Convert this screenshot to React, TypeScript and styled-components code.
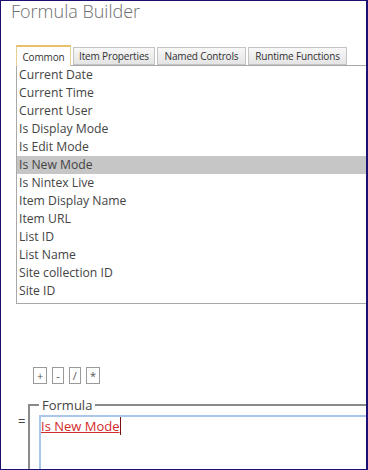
import React from 'react';
import styled, { createGlobalStyle } from 'styled-components';

const GlobalStyle = createGlobalStyle`
  html, body {
    margin: 0;
    padding: 0;
    background: #ffffff;
  }
  body {
    font-family: 'Open Sans', 'Noto Sans', 'Liberation Sans', sans-serif;
  }
`;

const Frame = styled.div`
  width: 368px;
  height: 470px;
  box-sizing: border-box;
  border: 1px solid #1b1172;
  border-right-width: 2px;
  overflow: hidden;
  background: #ffffff;
`;

const Title = styled.h1`
  margin: 0;
  padding-left: 10px;
  font-size: 18px;
  line-height: 20px;
  font-weight: 300;
  color: #6e6e6e;
  white-space: nowrap;
`;

const TabBar = styled.div`
  display: flex;
  align-items: flex-end;
  gap: 2px;
  margin-top: 24px;
  padding-left: 15px;
`;

const Tab = styled.div<{ $active?: boolean; $width: number }>`
  position: relative;
  z-index: ${(p) => (p.$active ? 1 : 0)};
  box-sizing: border-box;
  width: ${(p) => p.$width}px;
  height: ${(p) => (p.$active ? '21px' : '18px')};
  margin-bottom: ${(p) => (p.$active ? '-1px' : '0')};
  display: flex;
  align-items: center;
  justify-content: center;
  font-size: 10px;
  letter-spacing: -0.15px;
  color: #333333;
  white-space: nowrap;
  border: 1px solid ${(p) => (p.$active ? '#e6cf94' : '#c4c4c4')};
  border-bottom: ${(p) => (p.$active ? 'none' : '1px solid #c4c4c4')};
  border-top: ${(p) => (p.$active ? '2px solid #e8c16a' : '1px solid #c4c4c4')};
  background: ${(p) =>
    p.$active ? '#ffffff' : 'linear-gradient(#f8f8f8, #e4e4e4)'};
`;

const List = styled.div`
  margin-left: 15px;
  width: 400px;
  border: 1px solid #a8a8a8;
  padding-bottom: 3px;
`;

const Item = styled.div<{ $selected?: boolean }>`
  height: 18px;
  line-height: 18px;
  padding-left: 2px;
  font-size: 12.2px;
  color: #444444;
  white-space: nowrap;
  background: ${(p) => (p.$selected ? '#c6c6c6' : 'transparent')};
`;

const Operators = styled.div`
  display: flex;
  gap: 5px;
  margin-top: 63px;
  padding-left: 32px;
`;

const OpButton = styled.div`
  box-sizing: border-box;
  min-width: 11px;
  height: 17px;
  padding: 0 3px;
  display: flex;
  align-items: center;
  justify-content: center;
  border: 1px solid #9a9a9a;
  font-size: 11px;
  color: #555555;
`;

const FormulaRow = styled.div`
  display: flex;
  align-items: flex-start;
  margin-top: 13px;
  padding-left: 17px;
`;

const Equals = styled.div`
  flex: 0 0 10px;
  margin-top: 16px;
  font-size: 13px;
  line-height: 16px;
  color: #444444;
`;

const FormulaSet = styled.fieldset`
  flex: 0 0 auto;
  margin: 0;
  min-width: 0;
  width: 400px;
  height: 160px;
  padding: 2px 0 0 9px;
  border: 2px solid #8a8a8a;
`;

const Legend = styled.legend`
  padding: 0 3px;
  font-size: 13px;
  line-height: 16px;
  color: #444444;
`;

const Editor = styled.div`
  height: 130px;
  border: 2px solid #aac6ec;
  padding: 1px 0 0 0;
  font-size: 13px;
  line-height: 16px;
`;

const Token = styled.span`
  color: #d42a2a;
  text-decoration: underline;
  text-decoration-color: #d42a2a;
  border-right: 1px solid #7a1010;
`;

const items = [
  'Current Date',
  'Current Time',
  'Current User',
  'Is Display Mode',
  'Is Edit Mode',
  'Is New Mode',
  'Is Nintex Live',
  'Item Display Name',
  'Item URL',
  'List ID',
  'List Name',
  'Site collection ID',
  'Site ID',
];

const tabs = [
  { label: 'Common', width: 55 },
  { label: 'Item Properties', width: 82 },
  { label: 'Named Controls', width: 89 },
  { label: 'Runtime Functions', width: 99 },
];

const App = () => {
  const [active, setActive] = React.useState(0);
  const [selected, setSelected] = React.useState('Is New Mode');

  return (
    <Frame>
      <GlobalStyle />
      <Title>Formula Builder</Title>

      <TabBar>
        {tabs.map((t, i) => (
          <Tab
            key={t.label}
            $active={i === active}
            $width={t.width}
            onClick={() => setActive(i)}
          >
            {t.label}
          </Tab>
        ))}
      </TabBar>

      <List>
        {items.map((it) => (
          <Item key={it} $selected={it === selected} onClick={() => setSelected(it)}>
            {it}
          </Item>
        ))}
      </List>

      <Operators>
        <OpButton>+</OpButton>
        <OpButton>-</OpButton>
        <OpButton>/</OpButton>
        <OpButton>*</OpButton>
      </Operators>

      <FormulaRow>
        <Equals>=</Equals>
        <FormulaSet>
          <Legend>Formula</Legend>
          <Editor>
            <Token>{selected}</Token>
          </Editor>
        </FormulaSet>
      </FormulaRow>
    </Frame>
  );
};

export default App;
